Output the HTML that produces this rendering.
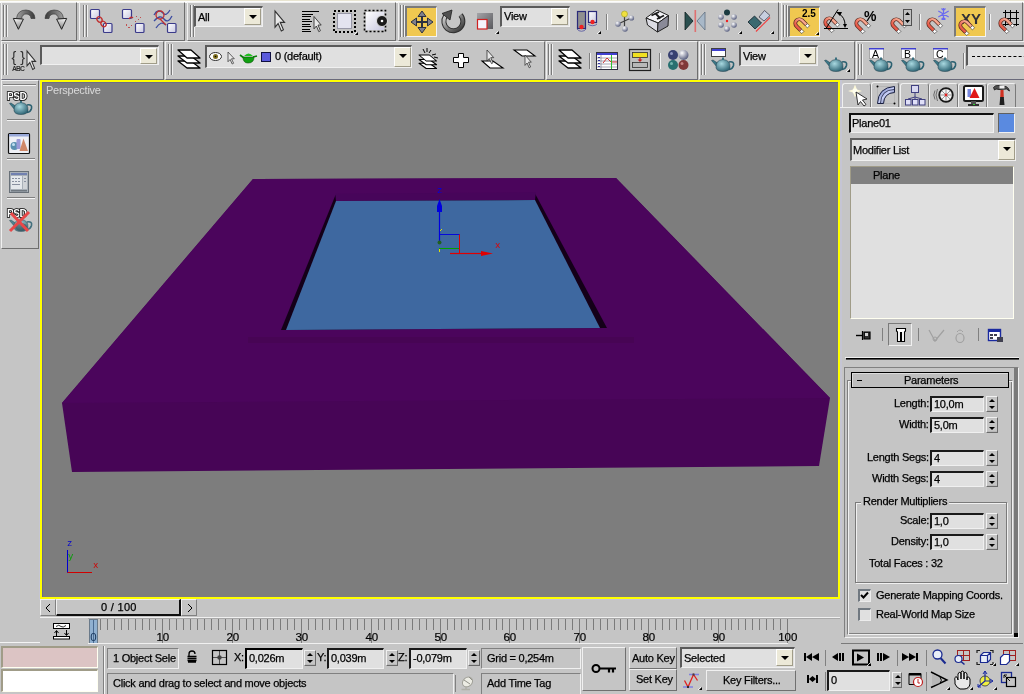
<!DOCTYPE html>
<html><head><meta charset="utf-8">
<style>
*{margin:0;padding:0;box-sizing:border-box}
html,body{width:1024px;height:694px;overflow:hidden;-webkit-font-smoothing:none;background:#c5c5c5;font-family:"Liberation Sans",sans-serif;font-size:11px;color:#000}
.a{position:absolute}
.vs{position:absolute;width:2px;border-left:1px solid #808080;border-right:1px solid #f4f4f4}
.hs{position:absolute;height:2px;border-top:1px solid #808080;border-bottom:1px solid #f4f4f4}
.grip{position:absolute;width:6px;border-left:1px solid #808080;border-right:1px solid #808080}
.grip:after{content:"";position:absolute;left:1px;top:0;bottom:0;width:1px;background:#f4f4f4}
.dd{position:absolute;background:#e0e0e0;border-top:2px solid #5a5a5a;border-left:2px solid #5a5a5a;border-right:1px solid #f0f0f0;border-bottom:1px solid #f0f0f0}
.ddb{position:absolute;right:0;top:0;bottom:0;width:17px;background:#ece9d8;border-right:1px solid #a09c88;border-bottom:1px solid #a09c88;border-top:1px solid #fff;border-left:1px solid #fff}
.ddb:after{content:"";position:absolute;left:4px;top:6px;border-left:4px solid transparent;border-right:4px solid transparent;border-top:4px solid #000}
.fld{position:absolute;will-change:transform;-webkit-text-stroke:0.25px #000;letter-spacing:-0.25px;background:#e0e0e0;border-top:2px solid #1a1a1a;border-left:2px solid #1a1a1a;border-right:1px solid #f0f0f0;border-bottom:1px solid #f0f0f0;padding-left:2px;line-height:13px;font-size:11px}
.spin{position:absolute;width:12px;height:16px;border:1px solid #f0f0f0;border-right:1px solid #6a6a6a;border-bottom:1px solid #6a6a6a;background:#c5c5c5;box-shadow:inset 0 -1px 0 #b8b8b8}
.spin:before{content:"";position:absolute;left:2px;top:2px;border-left:3px solid transparent;border-right:3px solid transparent;border-bottom:3px solid #000;box-shadow:0 5px 0 -4px #f0f0f0}
.spin:after{content:"";position:absolute;left:2px;top:9px;border-left:3px solid transparent;border-right:3px solid transparent;border-top:3px solid #000}
.t{position:absolute;will-change:transform;-webkit-text-stroke:0.25px currentColor;letter-spacing:-0.25px;white-space:nowrap;font-size:11px;line-height:13px}
svg{position:absolute;overflow:visible}
</style></head><body>
<!-- top strip -->
<div class="a" style="left:0;top:0;width:1024px;height:1px;background:#e8e4d0"></div>
<div class="a" style="left:0;top:1px;width:1024px;height:2px;background:#fcfcfc"></div>
<!-- toolbar panels -->
<div class="a" style="left:1px;top:2px;width:76px;height:39px;border-top:1px solid #f0f0f0;border-left:1px solid #f0f0f0;border-right:1px solid #6e6e6e;border-bottom:1px solid #6e6e6e"></div>
<div class="a" style="left:79px;top:2px;width:106px;height:39px;border-top:1px solid #f0f0f0;border-left:1px solid #f0f0f0;border-right:1px solid #6e6e6e;border-bottom:1px solid #6e6e6e"></div>
<div class="a" style="left:187px;top:2px;width:209px;height:39px;border-top:1px solid #f0f0f0;border-left:1px solid #f0f0f0;border-right:1px solid #6e6e6e;border-bottom:1px solid #6e6e6e"></div>
<div class="a" style="left:398px;top:2px;width:381px;height:39px;border-top:1px solid #f0f0f0;border-left:1px solid #f0f0f0;border-right:1px solid #6e6e6e;border-bottom:1px solid #6e6e6e"></div>
<div class="a" style="left:781px;top:2px;width:242px;height:39px;border-top:1px solid #f0f0f0;border-left:1px solid #f0f0f0;border-right:1px solid #6e6e6e;border-bottom:1px solid #6e6e6e"></div>
<div class="a" style="left:3px;top:5px;width:1px;height:32px;background:#7a7a7a"></div><div class="a" style="left:4px;top:5px;width:1px;height:32px;background:#f0f0f0"></div><div class="a" style="left:6px;top:5px;width:1px;height:32px;background:#7a7a7a"></div><div class="a" style="left:7px;top:5px;width:1px;height:32px;background:#f0f0f0"></div>
<div class="a" style="left:83px;top:5px;width:1px;height:32px;background:#7a7a7a"></div><div class="a" style="left:84px;top:5px;width:1px;height:32px;background:#f0f0f0"></div><div class="a" style="left:86px;top:5px;width:1px;height:32px;background:#7a7a7a"></div><div class="a" style="left:87px;top:5px;width:1px;height:32px;background:#f0f0f0"></div>
<div class="a" style="left:190px;top:5px;width:1px;height:32px;background:#7a7a7a"></div><div class="a" style="left:191px;top:5px;width:1px;height:32px;background:#f0f0f0"></div><div class="a" style="left:193px;top:5px;width:1px;height:32px;background:#7a7a7a"></div><div class="a" style="left:194px;top:5px;width:1px;height:32px;background:#f0f0f0"></div>
<div class="a" style="left:400px;top:5px;width:1px;height:32px;background:#7a7a7a"></div><div class="a" style="left:401px;top:5px;width:1px;height:32px;background:#f0f0f0"></div><div class="a" style="left:403px;top:5px;width:1px;height:32px;background:#7a7a7a"></div><div class="a" style="left:404px;top:5px;width:1px;height:32px;background:#f0f0f0"></div>
<div class="a" style="left:783px;top:5px;width:1px;height:32px;background:#7a7a7a"></div><div class="a" style="left:784px;top:5px;width:1px;height:32px;background:#f0f0f0"></div><div class="a" style="left:786px;top:5px;width:1px;height:32px;background:#7a7a7a"></div><div class="a" style="left:787px;top:5px;width:1px;height:32px;background:#f0f0f0"></div>
<div class="a" style="left:1px;top:41px;width:163px;height:39px;border-top:1px solid #f0f0f0;border-left:1px solid #f0f0f0;border-right:1px solid #6e6e6e;border-bottom:1px solid #6a6a7a"></div>
<div class="a" style="left:165px;top:41px;width:380px;height:39px;border-top:1px solid #f0f0f0;border-left:1px solid #f0f0f0;border-right:1px solid #6e6e6e;border-bottom:1px solid #6a6a7a"></div>
<div class="a" style="left:546px;top:41px;width:152px;height:39px;border-top:1px solid #f0f0f0;border-left:1px solid #f0f0f0;border-right:1px solid #6e6e6e;border-bottom:1px solid #6a6a7a"></div>
<div class="a" style="left:699px;top:41px;width:156px;height:39px;border-top:1px solid #f0f0f0;border-left:1px solid #f0f0f0;border-right:1px solid #6e6e6e;border-bottom:1px solid #6a6a7a"></div>
<div class="a" style="left:856px;top:41px;width:175px;height:39px;border-top:1px solid #f0f0f0;border-left:1px solid #f0f0f0;border-right:1px solid #6e6e6e;border-bottom:1px solid #6a6a7a"></div>
<div class="a" style="left:3px;top:44px;width:1px;height:31px;background:#7a7a7a"></div><div class="a" style="left:4px;top:44px;width:1px;height:31px;background:#f0f0f0"></div><div class="a" style="left:6px;top:44px;width:1px;height:31px;background:#7a7a7a"></div><div class="a" style="left:7px;top:44px;width:1px;height:31px;background:#f0f0f0"></div>
<div class="a" style="left:168px;top:44px;width:1px;height:31px;background:#7a7a7a"></div><div class="a" style="left:169px;top:44px;width:1px;height:31px;background:#f0f0f0"></div><div class="a" style="left:171px;top:44px;width:1px;height:31px;background:#7a7a7a"></div><div class="a" style="left:172px;top:44px;width:1px;height:31px;background:#f0f0f0"></div>
<div class="a" style="left:548px;top:44px;width:1px;height:31px;background:#7a7a7a"></div><div class="a" style="left:549px;top:44px;width:1px;height:31px;background:#f0f0f0"></div><div class="a" style="left:551px;top:44px;width:1px;height:31px;background:#7a7a7a"></div><div class="a" style="left:552px;top:44px;width:1px;height:31px;background:#f0f0f0"></div>
<div class="a" style="left:701px;top:44px;width:1px;height:31px;background:#7a7a7a"></div><div class="a" style="left:702px;top:44px;width:1px;height:31px;background:#f0f0f0"></div><div class="a" style="left:704px;top:44px;width:1px;height:31px;background:#7a7a7a"></div><div class="a" style="left:705px;top:44px;width:1px;height:31px;background:#f0f0f0"></div>
<div class="a" style="left:858px;top:44px;width:1px;height:31px;background:#7a7a7a"></div><div class="a" style="left:859px;top:44px;width:1px;height:31px;background:#f0f0f0"></div><div class="a" style="left:861px;top:44px;width:1px;height:31px;background:#7a7a7a"></div><div class="a" style="left:862px;top:44px;width:1px;height:31px;background:#f0f0f0"></div>
<div class="a" style="left:606px;top:14px;width:1px;height:16px;background:#808080"></div><div class="a" style="left:607px;top:14px;width:1px;height:16px;background:#f4f4f4"></div>
<div class="a" style="left:676px;top:14px;width:1px;height:16px;background:#808080"></div><div class="a" style="left:677px;top:14px;width:1px;height:16px;background:#f4f4f4"></div>
<div class="a" style="left:989px;top:14px;width:1px;height:16px;background:#808080"></div><div class="a" style="left:990px;top:14px;width:1px;height:16px;background:#f4f4f4"></div>
<div class="a" style="left:589px;top:53px;width:1px;height:16px;background:#808080"></div><div class="a" style="left:590px;top:53px;width:1px;height:16px;background:#f4f4f4"></div>
<div class="a" style="left:659px;top:53px;width:1px;height:16px;background:#808080"></div><div class="a" style="left:660px;top:53px;width:1px;height:16px;background:#f4f4f4"></div>
<div class="a" style="left:963px;top:53px;width:1px;height:16px;background:#808080"></div><div class="a" style="left:964px;top:53px;width:1px;height:16px;background:#f4f4f4"></div>


<div class="a" style="left:919px;top:14px;width:1px;height:16px;background:#808080"></div><div class="a" style="left:920px;top:14px;width:1px;height:16px;background:#f4f4f4"></div>
<!-- VIEWPORT -->
<div class="a" style="left:39px;top:80px;width:803px;height:520px;background:#c5c5d4"></div>
<div class="a" style="left:40px;top:80px;width:800px;height:519px;background:#7d7d7d;border:2px solid #ffff00"></div>
<div class="a" style="left:42px;top:82px;width:796px;height:1px;background:#6a6a8a"></div><div class="a" style="left:42px;top:82px;width:1px;height:515px;background:#6a6a8a"></div>
<svg style="left:0;top:0" width="1024" height="694">
 <polygon points="253,179 616,178 830,398 819,466 72,472 62,403" fill="#470556"/>
 <polygon points="253,179 616,178 830,398 62,403" fill="#4b055c"/>
 <rect x="248" y="337" width="386" height="6" fill="#45054f" opacity="0.55"/>
 <polygon points="335.5,195 535,193.5 607,328 281,330" fill="#140018"/>
 <polygon points="335.2,193.8 536,192.3 535,200 336,201" fill="#47055a"/>
 <polygon points="336,201 535,200 600,328 286,330" fill="#3e68a0"/>
</svg>
<div class="t" style="left:46px;top:84px;color:#dadada;-webkit-text-stroke:0">Perspective</div>

<!-- LEFT PANEL -->
<div class="a" style="left:1px;top:80px;width:38px;height:169px;border-top:1px solid #f0f0f0;border-left:1px solid #f0f0f0;border-right:1px solid #6e6e6e;border-bottom:1px solid #6e6e6e"></div>
<div class="hs" style="left:3px;top:84px;width:33px"></div>
<div class="hs" style="left:7px;top:119px;width:28px"></div>
<div class="hs" style="left:7px;top:158px;width:28px"></div>
<div class="hs" style="left:7px;top:197px;width:28px"></div>

<!-- COMMAND PANEL -->
<div class="a" style="left:842px;top:83px;width:29px;height:25px;border-top:1px solid #f0f0f0;border-left:1px solid #f0f0f0;border-right:1px solid #7a7a7a;border-radius:3px 3px 0 0"></div>
<div class="a" style="left:871px;top:82px;width:28px;height:26px;border-top:1px solid #f0f0f0;border-left:1px solid #f0f0f0;border-right:1px solid #7a7a7a;border-radius:3px 3px 0 0"></div>
<div class="a" style="left:900px;top:83px;width:29px;height:25px;border-top:1px solid #f0f0f0;border-left:1px solid #f0f0f0;border-right:1px solid #7a7a7a;border-radius:3px 3px 0 0"></div>
<div class="a" style="left:929px;top:83px;width:29px;height:25px;border-top:1px solid #f0f0f0;border-left:1px solid #f0f0f0;border-right:1px solid #7a7a7a;border-radius:3px 3px 0 0"></div>
<div class="a" style="left:958px;top:83px;width:29px;height:25px;border-top:1px solid #f0f0f0;border-left:1px solid #f0f0f0;border-right:1px solid #7a7a7a;border-radius:3px 3px 0 0"></div>
<div class="a" style="left:987px;top:83px;width:29px;height:25px;border-top:1px solid #f0f0f0;border-left:1px solid #f0f0f0;border-right:1px solid #7a7a7a;border-radius:3px 3px 0 0"></div>
<div class="a" style="left:840px;top:107px;width:184px;height:1px;background:#f0f0f0"></div>

<div class="a" style="left:849px;top:113px;width:145px;height:20px;background:#e0e0e0;border-top:2px solid #101010;border-left:2px solid #101010;border-right:1px solid #f0f0f0;border-bottom:1px solid #f0f0f0"><span class="t" style="left:1px;top:2px;font-size:11px">Plane01</span></div>
<div class="a" style="left:998px;top:113px;width:17px;height:20px;background:#5a8ae0;border-top:1px solid #606060;border-left:1px solid #606060;border-right:1px solid #f0f0f0;border-bottom:1px solid #f0f0f0"></div>
<div class="dd" style="left:850px;top:138px;width:166px;height:23px;border-color:#606060 #f0f0f0 #f0f0f0 #606060"><span class="t" style="left:1px;top:4px;font-size:11px">Modifier List</span><div class="ddb" style="top:0;right:0;height:20px;width:17px"></div></div>
<div class="a" style="left:850px;top:166px;width:164px;height:153px;background:#e0e0e0;border-top:1px solid #a09c88;border-left:1px solid #a09c88;border-right:1px solid #fffff0;border-bottom:1px solid #fffff0"></div>
<div class="a" style="left:851px;top:167px;width:162px;height:17px;background:#808080"><span class="t" style="left:22px;top:2px;font-size:11px">Plane</span></div>

<div class="a" style="left:888px;top:323px;width:24px;height:23px;border-top:1px solid #7a7a7a;border-left:1px solid #7a7a7a;border-right:1px solid #f0f0f0;border-bottom:1px solid #f0f0f0"></div>
<div class="a" style="left:882px;top:328px;width:1px;height:13px;background:#808080"></div>
<div class="a" style="left:918px;top:328px;width:1px;height:13px;background:#808080"></div>
<div class="a" style="left:978px;top:328px;width:1px;height:13px;background:#808080"></div>

<div class="a" style="left:845px;top:357px;width:174px;height:1px;background:#f0f0f0"></div>
<div class="a" style="left:846px;top:358px;width:173px;height:1px;background:#000"></div><div class="a" style="left:846px;top:359px;width:173px;height:1px;background:#505050"></div>

<div class="a" style="left:844px;top:367px;width:175px;height:271px;border-top:1px solid #808080;border-left:1px solid #808080;border-right:1px solid #f0f0f0;border-bottom:1px solid #f0f0f0"></div>
<div class="a" style="left:1014px;top:368px;width:4px;height:269px;background:#7a7a7a"></div>
<div class="a" style="left:1014px;top:633px;width:4px;height:4px;background:#000"></div>
<div class="a" style="left:847px;top:380px;width:166px;height:255px;border-left:1px solid #808080;border-top:1px solid #808080;border-right:1px solid #f0f0f0;border-bottom:1px solid #f0f0f0;box-shadow:inset 1px 1px 0 #f0f0f0, inset -1px -1px 0 #808080"></div>
<div class="a" style="left:851px;top:372px;width:158px;height:16px;background:#bebebe;border:1px solid #000;box-shadow:inset 1px 1px 0 #dcdcdc"><span class="a" style="left:5px;top:7px;width:5px;height:1px;background:#000"></span><span class="t" style="left:52px;top:1px;font-size:11px">Parameters</span></div>

<div class="t" style="right:95px;top:397px;font-size:11px">Length:</div>
<div class="fld" style="left:930px;top:396px;width:54px;height:16px">10,0m</div><div class="spin" style="left:986px;top:396px"></div>
<div class="t" style="right:95px;top:418px;font-size:11px">Width:</div>
<div class="fld" style="left:930px;top:417px;width:54px;height:16px">5,0m</div><div class="spin" style="left:986px;top:417px"></div>
<div class="t" style="right:95px;top:451px;font-size:11px">Length Segs:</div>
<div class="fld" style="left:930px;top:450px;width:54px;height:16px">4</div><div class="spin" style="left:986px;top:450px"></div>
<div class="t" style="right:95px;top:472px;font-size:11px">Width Segs:</div>
<div class="fld" style="left:930px;top:471px;width:54px;height:16px">4</div><div class="spin" style="left:986px;top:471px"></div>

<div class="a" style="left:855px;top:502px;width:152px;height:81px;border:1px solid #7a7a7a;box-shadow:1px 1px 0 #f0f0f0, inset 1px 1px 0 #f0f0f0"></div>
<div class="t" style="left:861px;top:495px;font-size:11px;background:#c5c5c5;padding:0 2px">Render Multipliers</div>
<div class="t" style="right:95px;top:514px;font-size:11px">Scale:</div>
<div class="fld" style="left:930px;top:513px;width:54px;height:16px">1,0</div><div class="spin" style="left:986px;top:513px"></div>
<div class="t" style="right:95px;top:535px;font-size:11px">Density:</div>
<div class="fld" style="left:930px;top:534px;width:54px;height:16px">1,0</div><div class="spin" style="left:986px;top:534px"></div>
<div class="t" style="left:869px;top:557px;font-size:11px">Total Faces : 32</div>

<div class="a" style="left:858px;top:589px;width:13px;height:13px;background:#e0e0e0;border-top:2px solid #707880;border-left:2px solid #707880;border-right:1px solid #ececec;border-bottom:1px solid #ececec"></div>
<svg style="left:860px;top:591px" width="10" height="10"><path d="M1,4 L3.5,6.5 L8,1.5" fill="none" stroke="#000" stroke-width="2"/></svg>
<div class="t" style="left:876px;top:589px;font-size:11px">Generate Mapping Coords.</div>
<div class="a" style="left:858px;top:608px;width:13px;height:13px;background:#e0e0e0;border-top:2px solid #707880;border-left:2px solid #707880;border-right:1px solid #ececec;border-bottom:1px solid #ececec"></div>
<div class="t" style="left:876px;top:608px;font-size:11px">Real-World Map Size</div>
<div class="a" style="left:841px;top:643px;width:182px;height:1px;background:#7a7a7a"></div>


<!-- TIME SLIDER -->
<div class="a" style="left:40px;top:599px;width:16px;height:17px;border-top:1px solid #f0f0f0;border-left:1px solid #f0f0f0;border-right:1px solid #808080;border-bottom:1px solid #808080"></div>
<div class="a" style="left:56px;top:599px;width:125px;height:17px;border-top:1px solid #f0f0f0;border-left:1px solid #f0f0f0;border-right:2px solid #101010;border-bottom:2px solid #101010"><span class="t" style="left:44px;top:1px;font-size:11px;letter-spacing:0.3px">0 / 100</span></div>
<div class="a" style="left:181px;top:599px;width:16px;height:17px;border-top:1px solid #f0f0f0;border-left:1px solid #f0f0f0;border-right:1px solid #808080;border-bottom:1px solid #808080"></div>
<svg style="left:44px;top:602px" width="10" height="12"><path d="M6,2 L2,6 L6,10" fill="none" stroke="#000" stroke-width="1"/></svg>
<svg style="left:185px;top:602px" width="10" height="12"><path d="M3,2 L7,6 L3,10" fill="none" stroke="#000" stroke-width="1"/></svg>
<div class="a" style="left:40px;top:617px;width:800px;height:1px;background:#f0f0f0"></div>
<!-- track bar -->
<svg style="left:0;top:0" width="1024" height="694" id="track"><path d="M88,618.5 H840" stroke="#a8a8a8" stroke-width="1"/><path d="M93.5,619 V643" stroke="#7a7a7a" stroke-width="1"/><path d="M100.5,619 V630" stroke="#7a7a7a" stroke-width="1"/><path d="M107.5,619 V630" stroke="#7a7a7a" stroke-width="1"/><path d="M114.5,619 V630" stroke="#7a7a7a" stroke-width="1"/><path d="M121.5,619 V630" stroke="#7a7a7a" stroke-width="1"/><path d="M128.5,619 V630" stroke="#7a7a7a" stroke-width="1"/><path d="M135.5,619 V630" stroke="#7a7a7a" stroke-width="1"/><path d="M142.5,619 V630" stroke="#7a7a7a" stroke-width="1"/><path d="M149.5,619 V630" stroke="#7a7a7a" stroke-width="1"/><path d="M155.5,619 V630" stroke="#7a7a7a" stroke-width="1"/><path d="M162.5,619 V643" stroke="#7a7a7a" stroke-width="1"/><path d="M169.5,619 V630" stroke="#7a7a7a" stroke-width="1"/><path d="M176.5,619 V630" stroke="#7a7a7a" stroke-width="1"/><path d="M183.5,619 V630" stroke="#7a7a7a" stroke-width="1"/><path d="M190.5,619 V630" stroke="#7a7a7a" stroke-width="1"/><path d="M197.5,619 V630" stroke="#7a7a7a" stroke-width="1"/><path d="M204.5,619 V630" stroke="#7a7a7a" stroke-width="1"/><path d="M211.5,619 V630" stroke="#7a7a7a" stroke-width="1"/><path d="M218.5,619 V630" stroke="#7a7a7a" stroke-width="1"/><path d="M225.5,619 V630" stroke="#7a7a7a" stroke-width="1"/><path d="M232.5,619 V643" stroke="#7a7a7a" stroke-width="1"/><path d="M239.5,619 V630" stroke="#7a7a7a" stroke-width="1"/><path d="M246.5,619 V630" stroke="#7a7a7a" stroke-width="1"/><path d="M253.5,619 V630" stroke="#7a7a7a" stroke-width="1"/><path d="M260.5,619 V630" stroke="#7a7a7a" stroke-width="1"/><path d="M267.5,619 V630" stroke="#7a7a7a" stroke-width="1"/><path d="M273.5,619 V630" stroke="#7a7a7a" stroke-width="1"/><path d="M280.5,619 V630" stroke="#7a7a7a" stroke-width="1"/><path d="M287.5,619 V630" stroke="#7a7a7a" stroke-width="1"/><path d="M294.5,619 V630" stroke="#7a7a7a" stroke-width="1"/><path d="M301.5,619 V643" stroke="#7a7a7a" stroke-width="1"/><path d="M308.5,619 V630" stroke="#7a7a7a" stroke-width="1"/><path d="M315.5,619 V630" stroke="#7a7a7a" stroke-width="1"/><path d="M322.5,619 V630" stroke="#7a7a7a" stroke-width="1"/><path d="M329.5,619 V630" stroke="#7a7a7a" stroke-width="1"/><path d="M336.5,619 V630" stroke="#7a7a7a" stroke-width="1"/><path d="M343.5,619 V630" stroke="#7a7a7a" stroke-width="1"/><path d="M350.5,619 V630" stroke="#7a7a7a" stroke-width="1"/><path d="M357.5,619 V630" stroke="#7a7a7a" stroke-width="1"/><path d="M364.5,619 V630" stroke="#7a7a7a" stroke-width="1"/><path d="M371.5,619 V643" stroke="#7a7a7a" stroke-width="1"/><path d="M378.5,619 V630" stroke="#7a7a7a" stroke-width="1"/><path d="M384.5,619 V630" stroke="#7a7a7a" stroke-width="1"/><path d="M391.5,619 V630" stroke="#7a7a7a" stroke-width="1"/><path d="M398.5,619 V630" stroke="#7a7a7a" stroke-width="1"/><path d="M405.5,619 V630" stroke="#7a7a7a" stroke-width="1"/><path d="M412.5,619 V630" stroke="#7a7a7a" stroke-width="1"/><path d="M419.5,619 V630" stroke="#7a7a7a" stroke-width="1"/><path d="M426.5,619 V630" stroke="#7a7a7a" stroke-width="1"/><path d="M433.5,619 V630" stroke="#7a7a7a" stroke-width="1"/><path d="M440.5,619 V643" stroke="#7a7a7a" stroke-width="1"/><path d="M447.5,619 V630" stroke="#7a7a7a" stroke-width="1"/><path d="M454.5,619 V630" stroke="#7a7a7a" stroke-width="1"/><path d="M461.5,619 V630" stroke="#7a7a7a" stroke-width="1"/><path d="M468.5,619 V630" stroke="#7a7a7a" stroke-width="1"/><path d="M475.5,619 V630" stroke="#7a7a7a" stroke-width="1"/><path d="M482.5,619 V630" stroke="#7a7a7a" stroke-width="1"/><path d="M489.5,619 V630" stroke="#7a7a7a" stroke-width="1"/><path d="M496.5,619 V630" stroke="#7a7a7a" stroke-width="1"/><path d="M502.5,619 V630" stroke="#7a7a7a" stroke-width="1"/><path d="M509.5,619 V643" stroke="#7a7a7a" stroke-width="1"/><path d="M516.5,619 V630" stroke="#7a7a7a" stroke-width="1"/><path d="M523.5,619 V630" stroke="#7a7a7a" stroke-width="1"/><path d="M530.5,619 V630" stroke="#7a7a7a" stroke-width="1"/><path d="M537.5,619 V630" stroke="#7a7a7a" stroke-width="1"/><path d="M544.5,619 V630" stroke="#7a7a7a" stroke-width="1"/><path d="M551.5,619 V630" stroke="#7a7a7a" stroke-width="1"/><path d="M558.5,619 V630" stroke="#7a7a7a" stroke-width="1"/><path d="M565.5,619 V630" stroke="#7a7a7a" stroke-width="1"/><path d="M572.5,619 V630" stroke="#7a7a7a" stroke-width="1"/><path d="M579.5,619 V643" stroke="#7a7a7a" stroke-width="1"/><path d="M586.5,619 V630" stroke="#7a7a7a" stroke-width="1"/><path d="M593.5,619 V630" stroke="#7a7a7a" stroke-width="1"/><path d="M600.5,619 V630" stroke="#7a7a7a" stroke-width="1"/><path d="M607.5,619 V630" stroke="#7a7a7a" stroke-width="1"/><path d="M614.5,619 V630" stroke="#7a7a7a" stroke-width="1"/><path d="M620.5,619 V630" stroke="#7a7a7a" stroke-width="1"/><path d="M627.5,619 V630" stroke="#7a7a7a" stroke-width="1"/><path d="M634.5,619 V630" stroke="#7a7a7a" stroke-width="1"/><path d="M641.5,619 V630" stroke="#7a7a7a" stroke-width="1"/><path d="M648.5,619 V643" stroke="#7a7a7a" stroke-width="1"/><path d="M655.5,619 V630" stroke="#7a7a7a" stroke-width="1"/><path d="M662.5,619 V630" stroke="#7a7a7a" stroke-width="1"/><path d="M669.5,619 V630" stroke="#7a7a7a" stroke-width="1"/><path d="M676.5,619 V630" stroke="#7a7a7a" stroke-width="1"/><path d="M683.5,619 V630" stroke="#7a7a7a" stroke-width="1"/><path d="M690.5,619 V630" stroke="#7a7a7a" stroke-width="1"/><path d="M697.5,619 V630" stroke="#7a7a7a" stroke-width="1"/><path d="M704.5,619 V630" stroke="#7a7a7a" stroke-width="1"/><path d="M711.5,619 V630" stroke="#7a7a7a" stroke-width="1"/><path d="M718.5,619 V643" stroke="#7a7a7a" stroke-width="1"/><path d="M725.5,619 V630" stroke="#7a7a7a" stroke-width="1"/><path d="M731.5,619 V630" stroke="#7a7a7a" stroke-width="1"/><path d="M738.5,619 V630" stroke="#7a7a7a" stroke-width="1"/><path d="M745.5,619 V630" stroke="#7a7a7a" stroke-width="1"/><path d="M752.5,619 V630" stroke="#7a7a7a" stroke-width="1"/><path d="M759.5,619 V630" stroke="#7a7a7a" stroke-width="1"/><path d="M766.5,619 V630" stroke="#7a7a7a" stroke-width="1"/><path d="M773.5,619 V630" stroke="#7a7a7a" stroke-width="1"/><path d="M780.5,619 V630" stroke="#7a7a7a" stroke-width="1"/><path d="M787.5,619 V643" stroke="#7a7a7a" stroke-width="1"/><text x="162.8" y="641" text-anchor="middle" font-family="Liberation Sans" font-size="11.5" fill="#000" stroke="#000" stroke-width="0.2">10</text><text x="232.8" y="641" text-anchor="middle" font-family="Liberation Sans" font-size="11.5" fill="#000" stroke="#000" stroke-width="0.2">20</text><text x="301.8" y="641" text-anchor="middle" font-family="Liberation Sans" font-size="11.5" fill="#000" stroke="#000" stroke-width="0.2">30</text><text x="371.8" y="641" text-anchor="middle" font-family="Liberation Sans" font-size="11.5" fill="#000" stroke="#000" stroke-width="0.2">40</text><text x="440.8" y="641" text-anchor="middle" font-family="Liberation Sans" font-size="11.5" fill="#000" stroke="#000" stroke-width="0.2">50</text><text x="509.8" y="641" text-anchor="middle" font-family="Liberation Sans" font-size="11.5" fill="#000" stroke="#000" stroke-width="0.2">60</text><text x="579.8" y="641" text-anchor="middle" font-family="Liberation Sans" font-size="11.5" fill="#000" stroke="#000" stroke-width="0.2">70</text><text x="648.8" y="641" text-anchor="middle" font-family="Liberation Sans" font-size="11.5" fill="#000" stroke="#000" stroke-width="0.2">80</text><text x="718.8" y="641" text-anchor="middle" font-family="Liberation Sans" font-size="11.5" fill="#000" stroke="#000" stroke-width="0.2">90</text><text x="787.8" y="641" text-anchor="middle" font-family="Liberation Sans" font-size="11.5" fill="#000" stroke="#000" stroke-width="0.2">100</text><rect x="89.5" y="619.5" width="8" height="24" fill="#90b0d0" stroke="#6a7a8a"/><path d="M93.5,620 V643" stroke="#4a6a90"/><text x="93.5" y="640.5" text-anchor="middle" font-family="Liberation Sans" font-size="11.5" fill="#1a3a60">0</text></svg>
<div class="a" style="left:0px;top:642px;width:40px;height:1px;background:#f4f4f4"></div>
<div class="a" style="left:88px;top:643px;width:700px;height:1px;background:#f0f0f0"></div>
<!-- bottom-left boxes -->
<div class="a" style="left:1px;top:646px;width:97px;height:22px;background:#dcc4c4;border-top:2px solid #a09c88;border-left:2px solid #a09c88;border-right:1px solid #fffff0;border-bottom:1px solid #fffff0"></div>
<div class="a" style="left:1px;top:669px;width:97px;height:23px;background:#ffffff;border-top:2px solid #a09c88;border-left:2px solid #a09c88;border-right:1px solid #fffff0;border-bottom:1px solid #fffff0"></div>
<div class="a" style="left:103px;top:646px;width:1px;height:48px;background:#808080"></div>
<div class="a" style="left:104px;top:646px;width:1px;height:48px;background:#f4f4f4"></div>
<!-- status -->
<div class="a" style="left:107px;top:648px;width:72px;height:21px;border-top:1px solid #808080;border-left:1px solid #808080;border-right:1px solid #f0f0f0;border-bottom:1px solid #f0f0f0;overflow:hidden"><span class="t" style="left:5px;top:3px;font-size:11px">1 Object Sele</span></div>
<div class="a" style="left:107px;top:673px;width:347px;height:21px;border-top:1px solid #808080;border-left:1px solid #808080;border-right:1px solid #f0f0f0"><span class="t" style="left:5px;top:3px;font-size:11px">Click and drag to select and move objects</span></div>
<div class="t" style="left:234px;top:651px;font-size:11px">X:</div>
<div class="fld" style="left:245px;top:648px;width:58px;height:21px;border-top-color:#000;border-left-color:#000;line-height:17px;font-size:11px">0,026m</div><div class="spin" style="left:304px;top:650px;height:16px"></div>
<div class="t" style="left:317px;top:651px;font-size:11px">Y:</div>
<div class="fld" style="left:327px;top:648px;width:57px;height:21px;line-height:17px;font-size:11px">0,039m</div><div class="spin" style="left:386px;top:650px;height:16px"></div>
<div class="t" style="left:398px;top:651px;font-size:11px">Z:</div>
<div class="fld" style="left:409px;top:648px;width:58px;height:21px;line-height:17px;font-size:11px">-0,079m</div><div class="spin" style="left:468px;top:650px;height:16px"></div>
<div class="a" style="left:481px;top:648px;width:100px;height:21px;border-top:1px solid #808080;border-left:1px solid #808080;border-right:1px solid #f0f0f0;border-bottom:1px solid #f0f0f0"><span class="t" style="left:5px;top:3px;font-size:11px">Grid = 0,254m</span></div>
<div class="a" style="left:455px;top:675px;width:1px;height:17px;background:#808080"></div>
<div class="a" style="left:481px;top:673px;width:100px;height:21px;border-top:1px solid #808080;border-left:1px solid #808080;border-right:1px solid #f0f0f0"><span class="t" style="left:5px;top:3px;font-size:11px">Add Time Tag</span></div>
<div class="a" style="left:582px;top:647px;width:44px;height:44px;border-top:1px solid #f0f0f0;border-left:1px solid #f0f0f0;border-right:1px solid #707070;border-bottom:1px solid #707070"></div>
<div class="a" style="left:629px;top:647px;width:48px;height:22px;border-top:1px solid #f0f0f0;border-left:1px solid #f0f0f0;border-right:1px solid #707070;border-bottom:1px solid #707070"><span class="t" style="left:2px;top:4px;font-size:11px">Auto Key</span></div>
<div class="a" style="left:629px;top:669px;width:48px;height:22px;border-top:1px solid #f0f0f0;border-left:1px solid #f0f0f0;border-right:1px solid #707070;border-bottom:1px solid #707070"><span class="t" style="left:6px;top:3px;font-size:11px">Set Key</span></div>
<div class="dd" style="left:680px;top:647px;width:115px;height:21px"><span class="t" style="left:2px;top:3px;font-size:11px">Selected</span><div class="ddb" style="top:0;right:1px;height:17px;width:17px"></div></div>
<div class="a" style="left:706px;top:670px;width:90px;height:21px;border-top:1px solid #f0f0f0;border-left:1px solid #f0f0f0;border-right:1px solid #707070;border-bottom:1px solid #707070"><span class="t" style="left:16px;top:3px;font-size:11px">Key Filters...</span></div>
<div class="a" style="left:825px;top:650px;width:1px;height:16px;background:#808080"></div>
<div class="a" style="left:897px;top:650px;width:1px;height:16px;background:#808080"></div>
<div class="a" style="left:926px;top:650px;width:1px;height:16px;background:#808080"></div>
<div class="a" style="left:825px;top:672px;width:1px;height:19px;background:#808080"></div>
<div class="a" style="left:926px;top:672px;width:1px;height:19px;background:#808080"></div>
<div class="fld" style="left:827px;top:670px;width:63px;height:21px;line-height:17px;font-size:11px">0</div><div class="spin" style="left:892px;top:672px;height:16px;width:10px"></div>

<!-- dropdowns row1 -->
<div class="dd" style="left:194px;top:6px;width:69px;height:21px"><span class="t" style="left:2px;top:3px;font-size:11px">All</span><div class="ddb" style="top:0;right:1px;height:17px;width:17px"></div></div>
<div class="dd" style="left:500px;top:6px;width:70px;height:21px"><span class="t" style="left:2px;top:2px;font-size:11px">View</span><div class="ddb" style="top:0;right:1px;height:17px;width:17px"></div></div>
<!-- yellow toggle buttons -->
<div class="a" style="left:405px;top:6px;width:32px;height:31px;background:#f0c850;border-top:2px solid #7a7a7a;border-left:2px solid #7a7a7a;border-right:1px solid #f4f4f4;border-bottom:1px solid #f4f4f4"></div>
<div class="a" style="left:788px;top:6px;width:32px;height:31px;background:#f0c850;border-top:2px solid #7a7a7a;border-left:2px solid #7a7a7a;border-right:1px solid #f4f4f4;border-bottom:1px solid #f4f4f4"></div>
<div class="a" style="left:954px;top:6px;width:32px;height:31px;background:#f0c850;border-top:2px solid #7a7a7a;border-left:2px solid #7a7a7a;border-right:1px solid #f4f4f4;border-bottom:1px solid #f4f4f4"></div>
<!-- dropdowns row2 -->
<div class="dd" style="left:40px;top:45px;width:119px;height:20px"><div class="ddb" style="top:1px;right:1px;height:16px;width:17px"></div></div>
<div class="dd" style="left:205px;top:45px;width:207px;height:23px"><span class="t" style="left:68px;top:3px;font-size:11px">0 (default)</span><div class="ddb" style="top:0;right:0;height:20px;width:17px"></div></div>
<div class="dd" style="left:739px;top:45px;width:79px;height:21px"><span class="t" style="left:2px;top:3px;font-size:11px">View</span><div class="ddb" style="top:0;right:1px;height:17px;width:17px"></div></div>
<div class="dd" style="left:966px;top:45px;width:70px;height:21px;border-right:none"><div class="a" style="left:4px;top:9px;width:60px;border-top:1px dashed #000"></div></div>

<svg style="left:0;top:0;pointer-events:none" width="1024" height="694">
<defs>
 <linearGradient id="gArrow" x1="0" y1="0" x2="1" y2="1"><stop offset="0" stop-color="#f8f8f8"/><stop offset="1" stop-color="#606060"/></linearGradient>
 <linearGradient id="gBox" x1="0" y1="0" x2="1" y2="1"><stop offset="0" stop-color="#ffffff"/><stop offset="1" stop-color="#c8c8e0"/></linearGradient>
 <radialGradient id="gTea" cx="0.4" cy="0.35" r="0.7"><stop offset="0" stop-color="#a8d8e0"/><stop offset="1" stop-color="#2a6070"/></radialGradient>
 <radialGradient id="gBall" cx="0.35" cy="0.3" r="0.7"><stop offset="0" stop-color="#ffffff"/><stop offset="1" stop-color="#5a6080"/></radialGradient>
 <linearGradient id="gMag" x1="0" y1="0" x2="1" y2="0"><stop offset="0" stop-color="#e85a48"/><stop offset="1" stop-color="#f8a890"/></linearGradient><g id="mag"><path d="M-4,5 V-1 A4,4 0 0 1 4,-1 V5" fill="none" stroke="#5a2a20" stroke-width="3.8"/><path d="M-4,5 V-1 A4,4 0 0 1 4,-1 V5" fill="none" stroke="url(#gMag)" stroke-width="2.4"/><rect x="-5.5" y="5" width="3" height="3" fill="#fff" stroke="#333" stroke-width="0.6"/><rect x="2.5" y="5" width="3" height="3" fill="#fff" stroke="#333" stroke-width="0.6"/></g>
 <g id="tea"><path d="M-6,2 L-11.5,-4.5 L-10,-5 L-4,-1Z" fill="#3a7888" stroke="#1a3a48" stroke-width="0.5"/><path d="M6,-3 Q11.5,-4 10.5,0.5 Q9.5,4 6,4.5" fill="none" stroke="#2a6070" stroke-width="1.6"/><path d="M-7,2.5 Q-7.5,-5 0,-5.5 Q7.5,-5 7,2.5 Q6.5,6.5 0,6.5 Q-6.5,6.5 -7,2.5Z" fill="url(#gTea)" stroke="#1a3a48" stroke-width="0.5"/><rect x="-1" y="-7.5" width="2" height="2.5" fill="#3a7080"/></g>
 <g id="flag"><path d="M0,0 L3,-3 L3,0Z" fill="#000"/><path d="M-1,0 L2,-3" stroke="#fff" stroke-width="0.8"/></g>
 <g id="layers"><path d="M0,11 L13,11 L22,18 L9,18Z" fill="#fff" stroke="#000" stroke-width="1.3" stroke-linejoin="round"/><path d="M0,6 L13,6 L22,13 L9,13Z" fill="#fff" stroke="#000" stroke-width="1.3" stroke-linejoin="round"/><path d="M0,0 L13,0 L22,8 L9,8Z" fill="#fff" stroke="#000" stroke-width="1.3" stroke-linejoin="round"/></g>
 <g id="cursor"><path d="M0,0 L0,13 L3,10 L6,16 L8,15 L5,9 L9,9Z" fill="#e8e8e8" stroke="#303030" stroke-width="1"/></g>
</defs>
<!-- undo / redo -->
<defs><linearGradient id="gUndo" x1="0" y1="0" x2="1" y2="0"><stop offset="0" stop-color="#a0a0a0"/><stop offset="1" stop-color="#383838"/></linearGradient>
<linearGradient id="gHead" x1="0" y1="0" x2="0.3" y2="1"><stop offset="0" stop-color="#ffffff"/><stop offset="1" stop-color="#8a8a8a"/></linearGradient>
<g id="undo"><path d="M16.5,18.5 Q17.5,10 26,10 Q34.5,10.5 35,18.5 L31,18.5 Q30.5,14 26,14 Q22.5,14 21.5,18.5Z" fill="url(#gUndo)" stroke="#303030" stroke-width="0.6"/>
<path d="M13.3,18.4 L23.4,19.1 L18.4,29.3Z" fill="url(#gHead)" stroke="#202020" stroke-width="1" stroke-linejoin="round"/></g></defs>
<use href="#undo"/>
<use href="#undo" transform="translate(80,0) scale(-1,1)"/>
<!-- link -->
<rect x="90.5" y="9.5" width="9" height="9" fill="url(#gBox)" stroke="#3a3a8a" stroke-width="1.2" rx="1"/>
<rect x="103.5" y="23.5" width="8.5" height="9" fill="url(#gBox)" stroke="#3a3a8a" stroke-width="1.2" rx="1"/>
<ellipse cx="99.5" cy="19.5" rx="2.3" ry="3" fill="none" stroke="#c03030" stroke-width="1.3" transform="rotate(-40 99.5 19.5)"/>
<ellipse cx="103.5" cy="24" rx="2.3" ry="3" fill="none" stroke="#c03030" stroke-width="1.3" transform="rotate(-40 103.5 24)"/>
<!-- unlink -->
<rect x="122.5" y="9.5" width="9" height="9" fill="url(#gBox)" stroke="#3a3a8a" stroke-width="1.2" rx="1"/>
<rect x="135.5" y="23.5" width="8.5" height="9" fill="url(#gBox)" stroke="#3a3a8a" stroke-width="1.2" rx="1"/>
<path d="M129,19 Q131,16 133,18" fill="none" stroke="#c03030" stroke-width="1.3"/>
<g fill="#c05050"><rect x="136" y="16" width="1" height="1"/><rect x="138" y="19" width="1" height="1"/><rect x="135" y="21" width="1" height="1"/><rect x="126" y="24" width="1" height="2"/><rect x="128" y="27" width="2" height="1"/><rect x="131" y="25" width="1" height="1"/><rect x="140" y="17" width="1" height="1"/></g>
<!-- bind to spacewarp -->
<path d="M154,15 Q158,8 163,13 Q166,17 170,10 M154,21 Q160,14 164,19 Q168,24 172,16 M156,28 Q161,20 166,25" fill="none" stroke="#3a4aa0" stroke-width="1.3"/>
<circle cx="160" cy="15" r="4" fill="none" stroke="#c03030" stroke-width="1.3"/>
<path d="M160,19 L166,25" stroke="#c03030" stroke-width="1.3"/>
<rect x="167.5" y="23.5" width="8.5" height="9" fill="url(#gBox)" stroke="#3a3a8a" stroke-width="1.2" rx="1"/>
<!-- select arrow -->
<use href="#cursor" transform="translate(275,11) scale(1.05,1.25)"/>
<!-- select by name -->
<g stroke="#000" stroke-width="1"><path d="M302,11.5 H319 M302,14.5 H313 M302,16.5 H311 M302,19.5 H310 M302,21.5 H312 M302,24.5 H310 M302,26.5 H311 M302,29.5 H310 M302,31.5 H311"/></g>
<use href="#cursor" transform="translate(314,16.5) scale(0.8,0.95)"/>
<!-- rect region -->
<rect x="337.5" y="13.5" width="14" height="15" fill="#e4e4f0" stroke="#9898a8" stroke-width="1"/>
<rect x="334" y="11" width="21" height="21" fill="none" stroke="#000" stroke-width="2" stroke-dasharray="2,2"/>
<use href="#flag" transform="translate(355,35)"/>
<!-- window/crossing -->
<rect x="366" y="12" width="18" height="18" fill="url(#gBox)"/>
<rect x="364.5" y="10.5" width="21" height="21" fill="none" stroke="#000" stroke-width="1.6" stroke-dasharray="2,2"/>
<circle cx="382" cy="21" r="5.5" fill="#1a1a1a" stroke="#e0e0e0" stroke-width="1"/><circle cx="382" cy="21" r="1.3" fill="#fff"/>
<!-- move -->
<path d="M416,22 H428 M422,16 V28" stroke="#2a3040" stroke-width="2"/>
<path d="M422,11 L426,16.5 L418,16.5Z M422,33 L426,27.5 L418,27.5Z M411,22 L416.5,18 L416.5,26Z M433,22 L427.5,18 L427.5,26Z" fill="#80808c" stroke="#2a3040" stroke-width="1" stroke-linejoin="round"/>
<!-- rotate -->
<defs><linearGradient id="gRot" x1="0" y1="0" x2="1" y2="1"><stop offset="0" stop-color="#d8d8d8"/><stop offset="0.6" stop-color="#707070"/><stop offset="1" stop-color="#303030"/></linearGradient></defs>
<path d="M445.5,16 A9.5,9.5 0 1 0 460.5,15" fill="none" stroke="#303030" stroke-width="5"/>
<path d="M445.5,16 A9.5,9.5 0 1 0 460.5,15" fill="none" stroke="url(#gRot)" stroke-width="3"/>
<path d="M442,13.5 L452,10 L450,20Z" fill="#505050" stroke="#202020" stroke-width="0.8" stroke-linejoin="round"/>
<!-- scale -->
<rect x="477" y="13" width="16" height="16" fill="#505058"/>
<rect x="477" y="13" width="16" height="16" fill="url(#gArrow)" opacity="0.5"/>
<rect x="477.5" y="19.5" width="9.5" height="9.5" fill="#f4f4fc" stroke="#d02020" stroke-width="1.2"/>
<use href="#flag" transform="translate(496,34)"/>
<!-- pivot -->
<rect x="577.5" y="11.5" width="8" height="17" fill="#909090" stroke="#2a2a7a" stroke-width="1.2"/>
<circle cx="581.5" cy="27" r="2.2" fill="#f02020"/>
<path d="M577,29 A5,4 0 0 0 586,29" fill="none" stroke="#5050a0" stroke-width="0.8"/>
<rect x="588.5" y="11.5" width="8" height="11" fill="url(#gBox)" stroke="#2a2a7a" stroke-width="1.2"/>
<circle cx="592.5" cy="22" r="2.2" fill="#f02020"/>
<path d="M588,24 A5,3 0 0 0 597,24" fill="none" stroke="#5050a0" stroke-width="0.8"/>
<use href="#flag" transform="translate(598,34)"/>
<!-- manipulate -->
<path d="M624.5,15 V26 M624.5,21 L631,18 M624.5,21 L618,24" stroke="#404040" stroke-width="1.2"/>
<circle cx="624.5" cy="14" r="3" fill="#f0e040" stroke="#a0a020" stroke-width="0.6"/>
<circle cx="631.5" cy="18" r="2.6" fill="url(#gBall)"/>
<circle cx="618" cy="24" r="2.8" fill="url(#gBall)"/>
<circle cx="625" cy="29" r="2.8" fill="url(#gBall)"/>
<!-- keyboard shortcut -->
<path d="M646,18 L657,10 L668.5,15.5 L658,23Z" fill="#f4f4f8" stroke="#202020" stroke-width="1" stroke-linejoin="round"/>
<path d="M646,18 L658,23 L657.5,32 L647.5,25Z" fill="#dcdce4" stroke="#202020" stroke-width="1" stroke-linejoin="round"/>
<path d="M658,23 L668.5,15.5 L668,26 L657.5,32Z" fill="#8a8a98" stroke="#202020" stroke-width="1" stroke-linejoin="round"/>
<path d="M651.5,15.5 L659,12 M655.5,13.5 L660.5,18.5 M657,19 L664,15.5" stroke="#1a1a1a" stroke-width="1.8"/>
<!-- mirror -->
<path d="M685,12 L693,21 L685,30Z" fill="#2a5050" stroke="#102020" stroke-width="0.8"/>
<rect x="694.5" y="10" width="1.6" height="22" fill="#e07070"/>
<path d="M705,12 L697,21 L705,30Z" fill="#a8b8c8" stroke="#607080" stroke-width="0.8"/>
<!-- array -->
<circle cx="727" cy="12.5" r="3" fill="#1a3a40"/>
<circle cx="721" cy="17" r="2.8" fill="url(#gBall)"/><circle cx="734" cy="17" r="2.8" fill="url(#gBall)"/>
<circle cx="721" cy="25" r="2.8" fill="url(#gBall)"/><circle cx="734" cy="25" r="2.8" fill="url(#gBall)"/>
<circle cx="727" cy="29" r="2.8" fill="url(#gBall)"/>
<circle cx="727" cy="21" r="1.2" fill="#f02020"/>
<use href="#flag" transform="translate(739,34)"/>
<!-- align -->
<path d="M748,22 L754.5,16 L761.5,23 L755,29Z" fill="#3a6870" stroke="#102028" stroke-width="0.8"/>
<path d="M759,17 L764.5,10.5 L770,15.5 L764,21Z" fill="#c8d0e0" stroke="#404050" stroke-width="0.8"/>
<path d="M756,31.5 L770,17.5" stroke="#f04040" stroke-width="1.2"/>
<use href="#flag" transform="translate(771,34)"/>
<!-- snaps -->
<use href="#mag" transform="translate(800,24) rotate(-45)"/>
<text x="802" y="17" font-family="Liberation Sans" font-weight="bold" font-size="10" fill="#000">2.5</text>
<use href="#flag" transform="translate(816,35)"/>
<use href="#mag" transform="translate(830,23) rotate(-45)"/>
<path d="M824,28.5 H848 M826,28.5 L838,9.5" stroke="#000" stroke-width="1"/>
<path d="M838,13 A14,14 0 0 1 845,26" fill="none" stroke="#000" stroke-width="1"/>
<path d="M836,12 L840,16 L842,12Z M843,24 L847,24 L845,28Z" fill="#000"/>
<use href="#mag" transform="translate(861,24) rotate(-45)"/>
<text x="864" y="21" font-family="Liberation Sans" font-weight="bold" font-size="14" fill="#000">%</text>
<use href="#mag" transform="translate(897,24) rotate(-45)"/>
<rect x="903.5" y="9.5" width="8" height="16" fill="#c0c0c0" stroke="#505050" stroke-width="1"/>
<path d="M905,15 L907.5,12 L910,15Z M905,20 L907.5,23 L910,20Z" fill="#000"/>
<use href="#mag" transform="translate(933,24) rotate(-45)"/>
<g stroke="#6a6af0" stroke-width="1.2" fill="none"><path d="M943.5,8 V20 M938.3,11 L948.7,17 M948.7,11 L938.3,17 M941.5,8.5 L943.5,10.5 L945.5,8.5 M941.5,19.5 L943.5,17.5 L945.5,19.5"/></g>
<text x="961" y="24" font-family="Liberation Sans" font-weight="bold" font-size="15" fill="#303038">XY</text>
<use href="#mag" transform="translate(965,26) rotate(-45)"/>
<g stroke="#000" stroke-width="1"><path d="M1003,12.5 H1019 M1003,18.5 H1019 M1003,24.5 H1019 M1005.5,10 V26 M1010.5,10 V26 M1016.5,10 V26"/></g>
<use href="#mag" transform="translate(1005,24) rotate(-45)"/>

<!-- ROW 2 -->
<g fill="#303030" font-family="Liberation Sans"><text x="11.5" y="61.5" font-size="14.5" textLength="13.5" lengthAdjust="spacingAndGlyphs">{ }</text><text x="12" y="71" font-size="6.8" font-weight="bold" textLength="13">ABC</text></g>
<use href="#cursor" transform="translate(27,51) scale(0.95,1.15)"/>
<use href="#layers" transform="translate(178,50)"/>
<ellipse cx="215.5" cy="56.5" rx="6" ry="4" fill="#fff" stroke="#303030" stroke-width="1"/><circle cx="215.5" cy="56.5" r="2.5" fill="#807020"/><circle cx="215.5" cy="56.5" r="0.8" fill="#000"/>
<use href="#cursor" transform="translate(228,52) scale(0.7,0.75)"/>
<path d="M243,57 Q243,63 248,63 Q254,63 254,57Z" fill="#10a010" stroke="#085008" stroke-width="0.6"/><path d="M240,55 L244,58 M253,57 L257,56" stroke="#088008" stroke-width="1.6"/><path d="M244,56 Q248.5,51 253,56Z" fill="#20c020"/>
<rect x="261.5" y="52.5" width="9" height="9" fill="#5a5adc" stroke="#101040" stroke-width="1"/>
<!-- layer icons -->
<use href="#layers" transform="translate(419,55) scale(0.8,0.75)"/>
<path d="M423,49 L425,53 M427,48 L427,52 M431,50 L429,53 M436,54 L432,55 M438,58 L434,57" stroke="#000" stroke-width="1"/>
<path d="M458.5,53.5 H463.5 V57.5 H468.5 V62.5 H463.5 V67.5 H458.5 V62.5 H453.5 V57.5 H458.5Z" fill="#fff" stroke="#000" stroke-width="1"/>
<path d="M482,61 L493,61 L503,68 L490,68Z" fill="#fff" stroke="#000" stroke-width="1.1"/>
<use href="#cursor" transform="translate(487,50) scale(0.75,0.85)"/>
<path d="M514,50 L527,50 L535,56 L522,56Z" fill="#fff" stroke="#000" stroke-width="1.1"/>
<use href="#cursor" transform="translate(525,55) scale(0.7,0.8)"/>
<use href="#layers" transform="translate(559,50)"/>
<!-- track/table -->
<rect x="596.5" y="52.5" width="21" height="17" fill="#fff" stroke="#303040" stroke-width="1"/>
<rect x="597" y="53" width="20" height="2" fill="#4040d0"/>
<g stroke="#808090" stroke-width="0.7"><path d="M597,58 H617 M597,61 H617 M597,64 H617 M597,67 H617 M601,55 V69"/></g>
<g fill="#3030a0"><rect x="598" y="57" width="2" height="1"/><rect x="598" y="60" width="2" height="1"/><rect x="598" y="63" width="2" height="1"/><rect x="598" y="66" width="2" height="1"/></g>
<path d="M603,63 L607,58 L611,62 L617,62" fill="none" stroke="#d03030" stroke-width="1"/>
<path d="M611.5,55 V69" stroke="#30c030" stroke-width="1"/>
<!-- material-editor like -->
<rect x="629.5" y="49.5" width="21" height="21" fill="#c0c0c0" stroke="#202020" stroke-width="1.2"/>
<rect x="632.5" y="52.5" width="15" height="5" fill="#f0e020" stroke="#303030" stroke-width="0.8"/>
<rect x="632.5" y="62.5" width="15" height="5" fill="#b8b8b8" stroke="#303030" stroke-width="0.8"/>
<path d="M640,57.5 V61" stroke="#c02020" stroke-width="1.3"/><path d="M637.5,59.5 L640,62 L642.5,59.5Z" fill="#c02020"/>
<!-- balls -->
<circle cx="673" cy="55" r="5" fill="#384070"/><circle cx="671.5" cy="53.5" r="1.5" fill="#a0a8d0" opacity="0.8"/>
<circle cx="683.5" cy="55" r="5" fill="url(#gBall)"/>
<circle cx="673" cy="65" r="5" fill="#287070"/><circle cx="671.5" cy="63.5" r="1.5" fill="#90d0c8" opacity="0.7"/>
<circle cx="683.5" cy="65" r="5" fill="#803838"/><circle cx="682" cy="63.5" r="1.5" fill="#e0a0a0" opacity="0.7"/>
<!-- render teapot -->
<rect x="711.5" y="48.5" width="14" height="8" fill="#fff" stroke="#404040" stroke-width="1"/><rect x="712" y="49" width="13" height="2" fill="#4040d0"/>
<use href="#tea" transform="translate(723,65)"/>
<use href="#tea" transform="translate(836,65)"/>
<use href="#flag" transform="translate(847,72)"/>
<!-- A B C -->
<g font-family="Liberation Sans" font-size="10.5" fill="#000">
<rect x="869.5" y="48.5" width="14" height="10" fill="#fff" stroke="#808080" stroke-width="0.6"/><rect x="869" y="48" width="15" height="1.5" fill="#4040d0"/><text x="872" y="58">A</text>
<rect x="901.5" y="48.5" width="14" height="10" fill="#fff" stroke="#808080" stroke-width="0.6"/><rect x="901" y="48" width="15" height="1.5" fill="#4040d0"/><text x="904" y="58">B</text>
<rect x="933.5" y="48.5" width="14" height="10" fill="#fff" stroke="#808080" stroke-width="0.6"/><rect x="933" y="48" width="15" height="1.5" fill="#4040d0"/><text x="936" y="58">C</text>
</g>
<use href="#tea" transform="translate(881,65)"/>
<use href="#tea" transform="translate(913,65)"/>
<use href="#tea" transform="translate(945,65)"/>
</svg>

<svg style="left:0;top:0;pointer-events:none" width="1024" height="694">
<!-- viewport gizmo -->
<g font-family="Liberation Mono" font-size="9">
<text x="437" y="193" fill="#0000e0">z</text>
<path d="M439.5,204 V243" stroke="#0000e0" stroke-width="1.2"/>
<path d="M439.5,199 L442,206 L442,212 L437,212 L437,206Z" fill="#0000e0"/>
<path d="M439,234.5 H459.5 V253" fill="none" stroke="#0000e0" stroke-width="0.9"/>
<path d="M459.5,234.5 V254" stroke="#e00000" stroke-width="1"/>
<path d="M439,248.5 H459" stroke="#00a000" stroke-width="1"/>
<path d="M450,253.5 H482" stroke="#e00000" stroke-width="1.2"/>
<path d="M481,251 L493,253.5 L481,256Z" fill="#e00000"/>
<text x="495" y="248" fill="#e00000">x</text>
<circle cx="439.5" cy="242.5" r="2" fill="#206020"/>
<path d="M440,231 L442,229 M439.5,249 V252" stroke="#e0e000" stroke-width="1"/>
<!-- corner tripod -->
<text x="67" y="546" fill="#0000d0">z</text>
<path d="M67.5,550 V572.5 H92" fill="none" stroke="#0000d0" stroke-width="1"/>
<path d="M67.5,572.5 H92" stroke="#d00000" stroke-width="1"/>
<text x="68" y="559" fill="#00a000">y</text>
<text x="93" y="568" fill="#d00000">x</text>
</g>
<!-- left panel icons -->
<use href="#tea" transform="translate(21,108)"/>
<g font-family="Liberation Sans" font-weight="bold" font-size="10.5" fill="#fff" stroke="#000" stroke-width="1.6" paint-order="stroke">
<text x="7" y="99.5" textLength="20">PSD</text>
</g>
<rect x="8.5" y="133.5" width="21" height="20" fill="#eef0f6" stroke="#101010" stroke-width="1.2" rx="1"/>
<rect x="9" y="134" width="20" height="2.5" fill="#98a8d8"/>
<circle cx="14.5" cy="146" r="4" fill="#5a90b0"/><circle cx="13.5" cy="144.5" r="1.5" fill="#c0e0f0"/>
<rect x="16.5" y="139" width="4" height="10" fill="#9a9ad8" rx="1"/>
<path d="M23.5,138.5 L28,151 L19.5,151Z" fill="#d08868"/>
<rect x="9.5" y="171.5" width="19" height="21" fill="#a8b0b8" stroke="#687078" stroke-width="1"/>
<rect x="11" y="173" width="16" height="2" fill="#7080b0"/>
<rect x="11" y="176" width="11" height="13" fill="#e4e8ec"/><rect x="23" y="176" width="4" height="13" fill="#d0d4d8"/>
<g fill="#8890a0"><rect x="12" y="178" width="2" height="1"/><rect x="15" y="178" width="2" height="1"/><rect x="18" y="178" width="2" height="1"/><rect x="12" y="181" width="2" height="1"/><rect x="15" y="181" width="2" height="1"/><rect x="18" y="181" width="2" height="1"/><rect x="12" y="184" width="8" height="1"/><rect x="24" y="178" width="2" height="1"/><rect x="24" y="181" width="2" height="1"/></g>
<rect x="11" y="190" width="16" height="1.5" fill="#707880"/>
<g opacity="0.85"><use href="#tea" transform="translate(21,225)"/></g><ellipse cx="21" cy="227" rx="6" ry="4" fill="#283840" opacity="0.5"/>
<g font-family="Liberation Sans" font-weight="bold" font-size="10.5" fill="#fff" stroke="#000" stroke-width="1.6" paint-order="stroke">
<text x="7" y="217" textLength="20">PSD</text>
</g>
<path d="M10,231 L29,212 M11,213 L28,231" stroke="#e84848" stroke-width="3"/>
<!-- command panel tabs -->
<defs><linearGradient id="gArc" x1="0" y1="0" x2="1" y2="1"><stop offset="0" stop-color="#4a5aa0"/><stop offset="0.5" stop-color="#c8d0f8"/><stop offset="1" stop-color="#283060"/></linearGradient></defs>
<path d="M848,91 L853,89.5 L855,84.5 L857,89.5 L862,91 L857,92.5 L855,97.5 L853,92.5Z" fill="#fffbd8" opacity="0.95"/>
<circle cx="855" cy="91" r="2.5" fill="#fffff0"/>
<path d="M856,92 L858,105 L860.5,101.5 L864,106 L866,104.5 L862.5,100 L867,99Z" fill="#fff" stroke="#202020" stroke-width="0.9" stroke-linejoin="round"/>
<rect x="877.5" y="86.5" width="17" height="17" fill="none" stroke="#909090" stroke-width="0.6" stroke-dasharray="1,1"/>
<path d="M877.5,103.5 Q878,87.5 894.5,86.5 L894.5,92.5 Q884,93 883.5,103.5Z" fill="url(#gArc)" stroke="#1a2040" stroke-width="1"/>
<path d="M880.5,103 Q881,90 894,89.5" fill="none" stroke="#1a2040" stroke-width="0.8"/>
<circle cx="877.5" cy="86.5" r="1" fill="#000"/><circle cx="894.5" cy="103.5" r="1" fill="#000"/>
<rect x="911.5" y="85.5" width="7" height="7" fill="#d8d8f0" stroke="#404080" stroke-width="1"/>
<path d="M915,93 V97 M908,99 L915,97 L922,99 M915,97 V99" fill="none" stroke="#404080" stroke-width="1"/>
<rect x="905.5" y="99.5" width="5.5" height="5.5" fill="#e0e0f8" stroke="#404080"/><rect x="912.5" y="99.5" width="5.5" height="5.5" fill="#e0e0f8" stroke="#404080"/><rect x="919.5" y="99.5" width="5.5" height="5.5" fill="#e0e0f8" stroke="#404080"/>
<circle cx="946" cy="95" r="6.8" fill="#f4f4f4" stroke="#181818" stroke-width="1.8"/>
<path d="M946,89 V101 M940,95 H952 M941.8,90.8 L950.2,99.2 M950.2,90.8 L941.8,99.2" stroke="#707070" stroke-width="0.7"/>
<circle cx="946" cy="95" r="1.4" fill="#e02020"/>
<path d="M937.5,89 Q934.5,95 937.5,101 M935,90.5 Q932.5,95 935,99.5" fill="none" stroke="#606060" stroke-width="0.9"/>
<rect x="964" y="86" width="19" height="15" fill="#fff" stroke="#181818" stroke-width="2" rx="1.5"/>
<rect x="968" y="104" width="11" height="2" fill="#303030"/><rect x="971" y="101" width="5" height="3" fill="#505050"/><rect x="973" y="104" width="2" height="1" fill="#30d030"/>
<rect x="967.5" y="89" width="3.5" height="8" fill="#7888e0"/><path d="M974.5,88 L979.5,98 L969.5,98Z" fill="#e01818"/>
<path d="M993.5,87.5 Q995,85 999,85.5 L1006,86.5 Q1009,88 1009.5,91 L1006.5,89 L999,89.5 L996,89 L994.5,90Z" fill="#505050" stroke="#101010" stroke-width="0.8"/>
<rect x="999.5" y="85.5" width="5" height="3" fill="#f0f0f0"/>
<path d="M1000.5,90 L1003.5,90 L1003.8,98 L1000.2,98Z" fill="#d03020"/>
<path d="M1000.2,97 L1003.8,97 L1004.5,105 L999.5,105Z" fill="#202020"/>
<!-- stack icons -->
<path d="M856,335.5 H863" stroke="#000" stroke-width="1.4"/><path d="M862.5,331 V340 M864,332 H870 V339 H864Z" fill="#303030" stroke="#000" stroke-width="1.2"/><rect x="865" y="333" width="3" height="3" fill="#d0d0d0"/>
<path d="M896.5,328.5 H905.5 V331 L904.5,332 V341.5 H901.5 V332.5 H900.5 V341.5 H897.5 V332 L896.5,331Z" fill="#fff" stroke="#000" stroke-width="1.1"/>
<path d="M929,330 L935,341 L944,330" fill="none" stroke="#a0a0a0" stroke-width="1.2"/><circle cx="935" cy="339" r="2" fill="none" stroke="#a0a0a0"/>
<ellipse cx="960" cy="338" rx="4" ry="4.5" fill="none" stroke="#a0a0a0" stroke-width="1.2"/><path d="M957,332 Q960,328 963,332" fill="none" stroke="#a0a0a0"/>
<rect x="988.5" y="329.5" width="12" height="11" fill="#fff" stroke="#1a2aa0" stroke-width="1.4"/><rect x="988" y="329" width="13" height="3" fill="#1a2aa0"/>
<g fill="#404050"><rect x="990" y="334" width="3" height="2"/><rect x="994" y="334" width="3" height="2"/><rect x="990" y="337" width="3" height="2"/><rect x="997" y="337" width="6" height="5"/></g>
<!-- time slider config icon -->
<rect x="53.5" y="623.5" width="16" height="5" fill="#fff" stroke="#000" stroke-width="1"/>
<path d="M56,626.5 Q59,624 61,626.5 Q63,628 66,625.5" fill="none" stroke="#000" stroke-width="0.8"/>
<path d="M56.5,636 V631 M54.5,633 L56.5,630.5 L58.5,633 M66.5,630 V635 M64.5,633 L66.5,635.5 L68.5,633" fill="none" stroke="#000" stroke-width="1"/>
<rect x="53.5" y="636.5" width="16" height="2.5" fill="#fff" stroke="#000" stroke-width="1"/>
<!-- lock -->
<path d="M189,656 V654 Q189,651 192,651 Q195,651 195,654" fill="none" stroke="#000" stroke-width="1.3"/>
<path d="M187.5,656.5 H196.5 M187.5,658.5 H196.5 M187.5,660.5 H196.5 M188,662 H196" stroke="#000" stroke-width="1.3"/>
<!-- transform icon -->
<rect x="212.5" y="650.5" width="14" height="14" fill="none" stroke="#000" stroke-width="1.2"/>
<path d="M219.5,651 V664 M213,657.5 H226" stroke="#000" stroke-width="0.6"/>
<circle cx="219.5" cy="657.5" r="2.2" fill="#404040"/>
<!-- satellite -->
<ellipse cx="467.5" cy="682" rx="5.5" ry="4.5" transform="rotate(-40 467.5 682)" fill="#ecece4" stroke="#a0a098" stroke-width="1"/><path d="M464,680 L470,684 M469,677 L472,680" stroke="#909088" stroke-width="1"/><path d="M466,686 V689 M461.5,689.5 H470" stroke="#b0b0a8" stroke-width="1.5"/>
<!-- key -->
<circle cx="596" cy="668.5" r="3.5" fill="none" stroke="#000" stroke-width="2"/>
<path d="M600,668.5 H616 M609,668.5 V672.5 M613,668.5 V672.5" stroke="#000" stroke-width="2.2"/>
<!-- curve icon -->
<path d="M683,687 H693 M689,674.5 H699" stroke="#8080e0" stroke-width="1.6"/>
<path d="M684.5,680.5 L688,687 L693.5,674.5 L697.5,680.5" fill="none" stroke="#e02020" stroke-width="1.3"/>
<rect x="687" y="686" width="2" height="2" fill="#303030"/><rect x="692.5" y="673.5" width="2" height="2" fill="#404040"/>
<use href="#flag" transform="translate(699,690)"/>
<!-- playback -->
<g fill="#000">
<rect x="804" y="653" width="2" height="8"/><path d="M806,657 L812,653 V661Z M812,657 L819,653 V661Z"/>
<path d="M832,657 L838,653 V661Z"/><rect x="839" y="653" width="2" height="8"/><rect x="842" y="653" width="2" height="8"/>
<rect x="853" y="650.5" width="16" height="14" fill="none" stroke="#000" stroke-width="2"/><path d="M857,653.5 L864,657.5 L857,661.5Z"/>
<use href="#flag" transform="translate(868,666)"/>
<rect x="877" y="653" width="2" height="8"/><rect x="880" y="653" width="2" height="8"/><path d="M883,653 L890,657 L883,661Z"/>
<path d="M902,653 L909,657 L902,661Z M909,653 L916,657 L909,661Z"/><rect x="916" y="653" width="2" height="8"/>
<rect x="807" y="675" width="2" height="8"/><path d="M809,679 L812.5,676 V682Z M816,679 L812.5,676 V682Z"/><rect x="816" y="675" width="2" height="8"/>
</g>
<!-- nav icons -->
<circle cx="937.5" cy="654.5" r="4.5" fill="#e8eef8" stroke="#1a2a90" stroke-width="1.3"/>
<path d="M940.5,658 L945.5,663.5" stroke="#1a2a90" stroke-width="2"/>
<g fill="none" stroke="#a02020" stroke-width="1"><rect x="957.5" y="650.5" width="12" height="10"/><path d="M963.5,650.5 V660.5 M957.5,655.5 H969.5"/></g>
<circle cx="958.5" cy="659" r="3.5" fill="#e8eef8" stroke="#1a2a90" stroke-width="1.2"/><path d="M961,661.5 L964.5,664.5" stroke="#1a2a90" stroke-width="1.6"/>
<g fill="none" stroke="#202020" stroke-width="1.2"><path d="M977,653 V650.5 H980 M990,650.5 H993 V653 M977,662 V664.5 H980 M990,664.5 H993 V662"/></g>
<path d="M980.5,655.5 L983.5,652.5 H990.5 V659.5 L987.5,662.5 H980.5Z M980.5,655.5 H987.5 V662.5 M987.5,655.5 L990.5,652.5" fill="#e8eef8" stroke="#1a2a90" stroke-width="1.2"/>
<use href="#flag" transform="translate(993,666)"/>
<g fill="none" stroke="#a02020" stroke-width="1"><rect x="1003.5" y="650.5" width="12" height="10"/><path d="M1009.5,650.5 V660.5 M1003.5,655.5 H1015.5"/></g>
<path d="M1000.5,657.5 L1003.5,654.5 H1009.5 V661.5 L1006.5,664.5 H1000.5Z" fill="#fff" stroke="#1a2a90" stroke-width="1.2"/>
<use href="#flag" transform="translate(1016,666)"/>
<!-- row2 nav -->
<path d="M909,673.5 H921 V684.5 H909Z" fill="none" stroke="#000" stroke-width="1"/><rect x="909" y="673.5" width="12" height="2" fill="#000"/>
<circle cx="918" cy="682" r="4.5" fill="#fff" stroke="#c02020" stroke-width="1.2"/><path d="M918,679 V683 L920,683" fill="none" stroke="#c02020" stroke-width="1"/>
<path d="M931,672 L947,680 L931,687.5" fill="none" stroke="#000" stroke-width="1.4"/>
<path d="M932,674 L940,678 A6,6 0 0 1 940,683 L932,686Z" fill="#b0b0b0" opacity="0.7"/>
<path d="M940,677 A5,5 0 0 1 940,683.5" fill="none" stroke="#000" stroke-width="1"/>
<use href="#flag" transform="translate(947,690)"/>
<path d="M955,681 Q954,676 957,677 L958,680 V674 Q959,671 961,673 V679 V672 Q962,670 964,672 V679 V673 Q966,671 967,674 V680 V677 Q969,676 970,679 V684 Q969,689 964,689 H960 Q957,688 955,684Z" fill="#e8e8e8" stroke="#000" stroke-width="1"/>
<use href="#flag" transform="translate(970,690)"/>
<circle cx="985" cy="681" r="5" fill="#f0f040" stroke="#303030" stroke-width="0.8"/>
<path d="M985,671 V681 L993,681 M985,681 L978,687" fill="none" stroke="#1a2aa0" stroke-width="1.2"/>
<path d="M983,674 L985,671 L987,674 M990,679 L993,681 L990,683 M978,684 L978,687 L981,687" fill="none" stroke="#1a2aa0" stroke-width="1"/>
<use href="#flag" transform="translate(994,690)"/>
<rect x="1001.5" y="672.5" width="10" height="10" fill="none" stroke="#1a2a90" stroke-width="1.3"/>
<rect x="1006.5" y="677.5" width="9" height="9" fill="#c5c5c5" stroke="#000" stroke-width="1.2"/>
<path d="M1004,675 L1010,681 M1004,675 V678 M1004,675 H1007" fill="none" stroke="#000" stroke-width="0.9"/>
</svg>

</body></html>
